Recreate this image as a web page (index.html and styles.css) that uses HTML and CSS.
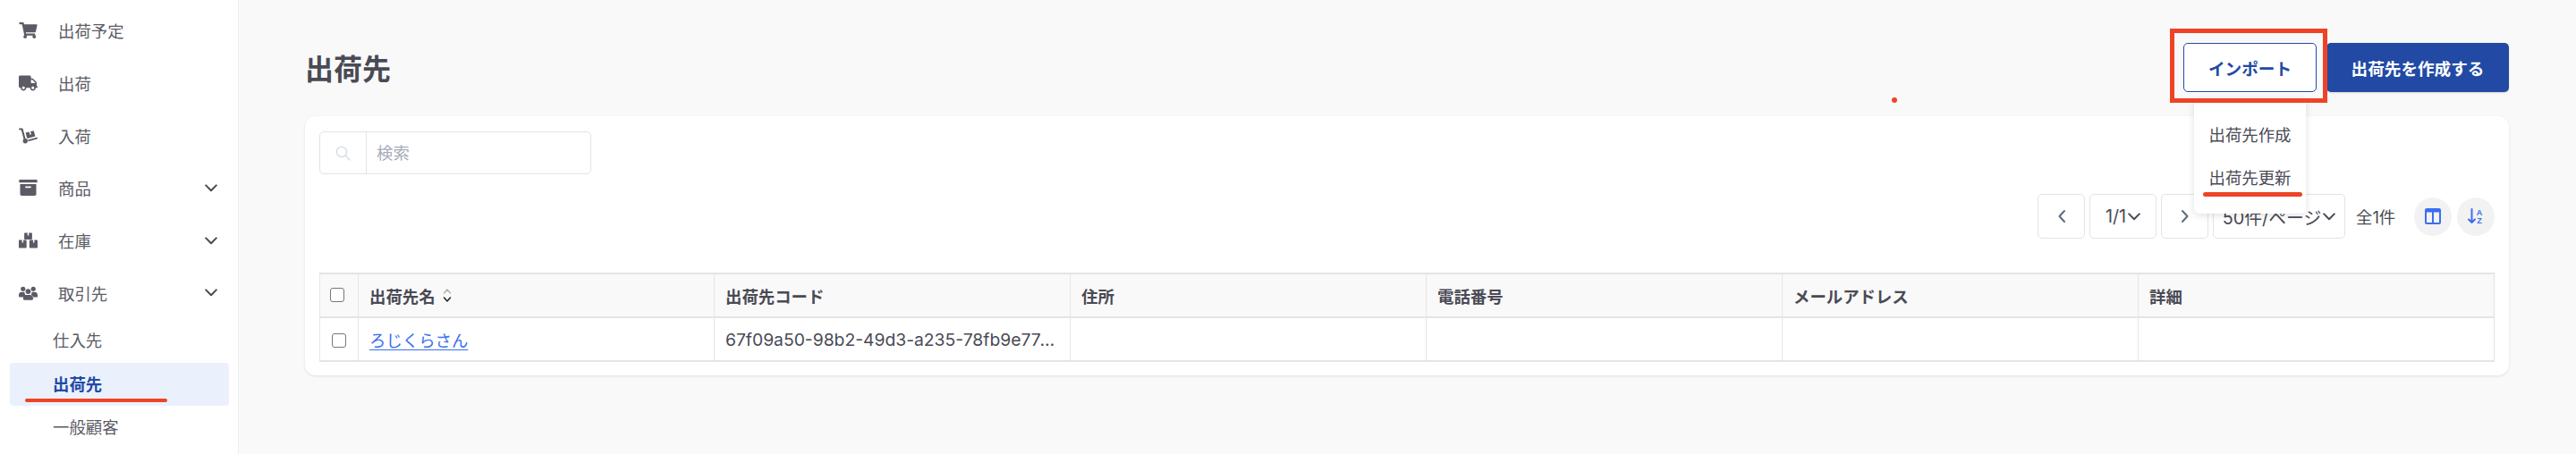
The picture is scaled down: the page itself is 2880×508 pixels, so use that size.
FILE: index.html
```html
<!DOCTYPE html>
<html lang="ja">
<head>
  <meta charset="UTF-8" />
  <title>出荷先</title>
  <link rel="stylesheet" href="styles.css">
</head>
<body>
<svg class="defs" width="0" height="0">
  <symbol id="chev-down" viewBox="0 0 14 9"><path d="M1.2 1.4 7 7.2l5.8-5.8" fill="none" stroke="currentColor" stroke-width="2" stroke-linecap="round" stroke-linejoin="round"/></symbol>
</svg>
<div class="app">
  <aside class="sidebar">
    <ul class="menu">
      <li class="menu-item">
        <svg class="menu-icon" viewBox="0 0 576 512"><path fill="currentColor" d="M528.12 301.319l47.273-208C578.806 78.301 567.391 64 551.99 64H159.208l-9.166-44.81C147.758 8.021 137.93 0 126.529 0H24C10.745 0 0 10.745 0 24v16c0 13.255 10.745 24 24 24h69.883l70.248 343.435C147.325 417.1 136 435.222 136 456c0 30.928 25.072 56 56 56s56-25.072 56-56c0-15.674-6.447-29.835-16.824-40h209.647C430.447 426.165 424 440.326 424 456c0 30.928 25.072 56 56 56s56-25.072 56-56c0-22.172-12.888-41.332-31.579-50.405l5.517-24.276c3.413-15.018-8.002-29.319-23.403-29.319H218.117l-6.545-32h293.145c11.206 0 20.92-7.754 23.403-18.681z"/></svg>
        <span>出荷予定</span>
      </li>
      <li class="menu-item">
        <svg class="menu-icon" viewBox="0 0 640 512"><path fill="currentColor" d="M624 352h-16V243.9c0-12.7-5.1-24.9-14.1-33.9L494 110.1c-9-9-21.2-14.1-33.9-14.1H416V48c0-26.5-21.5-48-48-48H48C21.5 0 0 21.5 0 48v320c0 26.5 21.5 48 48 48h16c0 53 43 96 96 96s96-43 96-96h128c0 53 43 96 96 96s96-43 96-96h48c8.8 0 16-7.2 16-16v-32c0-8.8-7.2-16-16-16zM160 464c-26.5 0-48-21.5-48-48s21.5-48 48-48 48 21.5 48 48-21.5 48-48 48zm320 0c-26.5 0-48-21.5-48-48s21.5-48 48-48 48 21.5 48 48-21.5 48-48 48zm80-208H416V144h44.1l99.9 99.9V256z"/></svg>
        <span>出荷</span>
      </li>
      <li class="menu-item">
        <svg class="menu-icon" viewBox="0 0 22 18"><path fill="none" stroke="currentColor" stroke-width="2.2" stroke-linecap="round" stroke-linejoin="round" d="M1.2 1.2h2.6l3.2 12"/><circle fill="currentColor" cx="7.6" cy="15" r="2.8"/><path fill="currentColor" d="M10.6 13.6 21 10.8c.7-.2 1 .3 1 .9 0 .5-.2.9-.7 1l-10.2 2.8zM8 5.4l4-1.1 1 3.3 1.6-.4-1-3.3 3.9-1 1.8 6.6-9.500 2.600z"/></svg>
        <span>入荷</span>
      </li>
      <li class="menu-item">
        <svg class="menu-icon" viewBox="0 0 21 18"><path fill="currentColor" d="M1.200 0h18.600c.5 0 .9.400.9.900v2.400H.3V.9c0-.5.400-.9.900-.9zM1.500 5h18v11.300c0 .9-.7 1.700-1.700 1.700H3.200c-.9 0-1.700-.8-1.700-1.700zm5.800 2.600v1.700h6.400V7.600z"/></svg>
        <span>商品</span>
        <svg class="menu-chev"><use href="#chev-down"/></svg>
      </li>
      <li class="menu-item">
        <svg class="menu-icon" viewBox="0 0 22 18"><path fill="currentColor" d="M7.200 0h3v3.200h1.600V0h3c.5 0 .8.300.8.800v6.400c0 .5-.3.800-.8.800H7.200c-.5 0-.8-.3-.8-.8V.8c0-.5.300-.8.800-.8zM.8 8.400h3v3.200h1.500V8.400h3c.5 0 .8.300.8.800V17c0 .6-.4 1-1 1H1c-.6 0-1-.4-1-1V9.200c0-.5.300-.8.800-.8zm12.900 0h3v3.200h1.500V8.400h3c.5 0 .8.300.8.800V17c0 .6-.4 1-1 1h-7.600c-.6 0-1-.4-1-1V9.200c0-.5.300-.8.800-.8z"/></svg>
        <span>在庫</span>
        <svg class="menu-chev"><use href="#chev-down"/></svg>
      </li>
      <li class="menu-item">
        <svg class="menu-icon" viewBox="0 0 22 16"><circle fill="currentColor" cx="5" cy="3" r="2.700"/><circle fill="currentColor" cx="17" cy="3" r="2.700"/><circle fill="currentColor" cx="11" cy="6" r="3.100"/><path fill="currentColor" d="M0 10.200C0 8.100 1.500 6.800 3.400 6.800h2.300c.5 0 .9.100 1.200.3-.3 1.200.2 2.500 1 3.300-1 .5-1.700 1.300-2 2.200H1c-.6 0-1-.4-1-1zm22 0c0-2.100-1.500-3.400-3.400-3.400h-2.300c-.5 0-.9.100-1.200.3.300 1.200-.2 2.500-1 3.300 1 .5 1.700 1.300 2 2.200h5.900c.6 0 1-.4 1-1zM8.800 10h4.400c2.100 0 3.600 1.500 3.600 3.500v1.300c0 .7-.5 1.200-1.200 1.200H6.400c-.7 0-1.200-.5-1.200-1.200v-1.300c0-2 1.500-3.500 3.600-3.500z"/></svg>
        <span>取引先</span>
        <svg class="menu-chev"><use href="#chev-down"/></svg>
      </li>
    </ul>
    <ul class="submenu">
      <li class="sub-item">仕入先</li>
      <li class="sub-item active">出荷先<i class="mark mark-side"></i></li>
      <li class="sub-item">一般顧客</li>
    </ul>
  </aside>

  <main class="main">
    <i class="red-dot"></i>
    <header class="page-head">
      <h1>出荷先</h1>
      <div class="actions">
        <div class="import-wrap">
          <button class="btn btn-outline">インポート</button>
          <div class="dropdown">
            <div class="dropdown-item">出荷先作成</div>
            <div class="dropdown-item">出荷先更新<i class="mark mark-drop"></i></div>
          </div>
          <i class="red-box"></i>
        </div>
        <button class="btn btn-primary">出荷先を作成する</button>
      </div>
    </header>

    <section class="card">
      <div class="search">
        <span class="search-icon">
          <svg width="17" height="17" viewBox="0 0 17 17"><circle cx="7" cy="7" r="5.600" fill="none" stroke="#d3d9e6" stroke-width="1.300"/><path d="m11.200 11.200 4.800 4.800" stroke="#d3d9e6" stroke-width="1.300" stroke-linecap="round"/></svg>
        </span>
        <span class="search-text">検索</span>
      </div>

      <div class="pager">
        <div class="page-box page-arrow">
          <svg width="10" height="16" viewBox="0 0 10 16"><path d="M8 2 2.500 8 8 14" fill="none" stroke="#5f6b80" stroke-width="2" stroke-linecap="round" stroke-linejoin="round"/></svg>
        </div>
        <div class="page-box page-num">1/1<svg class="page-chev"><use href="#chev-down"/></svg></div>
        <div class="page-box page-arrow">
          <svg width="10" height="16" viewBox="0 0 10 16"><path d="M2 2l5.500 6L2 14" fill="none" stroke="#5f6b80" stroke-width="2" stroke-linecap="round" stroke-linejoin="round"/></svg>
        </div>
        <div class="page-box page-size">50件/ページ<svg class="page-chev"><use href="#chev-down"/></svg></div>
        <span class="total">全1件</span>
        <div class="round-btns">
          <button class="round-btn">
            <svg width="18" height="18" viewBox="0 0 18 18"><path fill="#3b6ef0" d="M2 0h14c1.100 0 2 .9 2 2v14c0 1.100-.9 2-2 2H2c-1.100 0-2-.9-2-2V2C0 .9.900 0 2 0zm0 4.500V16h6V4.500zm8 0V16h6V4.500z"/></svg>
          </button>
          <button class="round-btn">
            <svg width="18" height="18" viewBox="0 0 18 18"><path d="M4.500 1v15M1 12.500 4.500 16 8 12.500" fill="none" stroke="#3b6ef0" stroke-width="2" stroke-linecap="round" stroke-linejoin="round"/><text class="az" x="13" y="7.500">A</text><text class="az" x="13" y="17">Z</text></svg>
          </button>
        </div>
      </div>

      <table class="grid">
        <thead>
          <tr>
            <th class="col-check"><span class="check check-head"></span></th>
            <th class="col-wide">
              <span class="th-name">出荷先名
                <svg class="sort" width="10" height="17" viewBox="0 0 10 17"><path d="M1.500 6 5 2l3.500 4" fill="none" stroke="#aaa" stroke-width="1.200" stroke-linecap="round" stroke-linejoin="round"/><path d="M1.500 11 5 15l3.500-4" fill="none" stroke="#222" stroke-width="1.500" stroke-linecap="round" stroke-linejoin="round"/></svg>
              </span>
            </th>
            <th class="col-wide">出荷先コード</th>
            <th class="col-wide">住所</th>
            <th class="col-wide">電話番号</th>
            <th class="col-wide">メールアドレス</th>
            <th class="col-wide">詳細</th>
          </tr>
        </thead>
        <tbody>
          <tr>
            <td><span class="check"></span></td>
            <td><a class="link" href="#">ろじくらさん</a></td>
            <td class="ellipsis">67f09a50-98b2-49d3-a235-78fb9e77c1d2</td>
            <td></td>
            <td></td>
            <td></td>
            <td></td>
          </tr>
        </tbody>
      </table>
    </section>
  </main>
</div>
</body>
</html>
```

FILE: styles.css
```css
* {
  box-sizing: border-box;
}

html, body {
  margin: 0;
  height: 100%;
  overflow: hidden;
}

body {
  font-family: Inter, "Noto Sans CJK JP", sans-serif;
  font-size: 18.4px;
  background-color: #f9f9f9;
  color: #4a4a55;
}

.defs {
  position: absolute;
}

.app {
  display: flex;
  height: 508px;
}

/* sidebar */
.sidebar {
  width: 267px;
  flex-shrink: 0;
  background-color: #fff;
  border-right: 1px solid #f0f0f0;
  padding-top: 5px;
  color: #5b5b66;
}

.menu, .submenu {
  list-style: none;
  margin: 0;
  padding: 0;
}

.menu-item {
  display: flex;
  align-items: center;
  height: 58.7px;
  padding-left: 21px;
  padding-right: 23px;
}

.menu-icon {
  width: 21px;
  height: 18px;
  margin-right: 23px;
  color: #5b5b66;
  flex-shrink: 0;
}

.menu-chev {
  width: 14px;
  height: 9px;
  margin-left: auto;
  color: #4a4a55;
}

.submenu {
  padding: 0 10px 0 11px;
}

.sub-item {
  position: relative;
  height: 48.5px;
  line-height: 48px;
  padding-left: 48px;
  border-radius: 4px;
}

.sub-item.active {
  background-color: #eaf1fd;
  color: #224aa5;
  font-weight: 700;
}

/* red annotations */
.mark {
  position: absolute;
  display: block;
  background-color: #ee4326;
  border-radius: 3px;
}

.mark-side {
  left: 17px;
  bottom: 4px;
  width: 159px;
  height: 4px;
}

.mark-drop {
  left: 10px;
  bottom: 3px;
  width: 111px;
  height: 5px;
}

.red-box {
  position: absolute;
  left: -15px;
  top: -16px;
  width: 176px;
  height: 83px;
  border: 5px solid #ee4326;
}

.red-dot {
  position: absolute;
  left: 2115px;
  top: 109px;
  width: 6px;
  height: 6px;
  border-radius: 50%;
  background-color: #ee4326;
}

/* main */
.main {
  flex: 1;
  padding: 48px 75px 0 74px;
}

.page-head {
  display: flex;
  align-items: center;
  justify-content: space-between;
  height: 55px;
  margin-bottom: 27px;
}

h1 {
  margin: 0 0 1px 0;
  font-size: 32px;
  font-weight: 700;
  color: #4a4a55;
}

.actions {
  display: flex;
  gap: 11px;
}

.import-wrap {
  position: relative;
}

.btn {
  display: block;
  height: 55px;
  font-family: inherit;
  font-size: 18.6px;
  font-weight: 700;
  border-radius: 5px;
  cursor: pointer;
}

.btn-outline {
  width: 149px;
  background-color: #fff;
  border: 1px solid #224aa5;
  color: #224aa5;
}

.btn-primary {
  width: 204px;
  background-color: #224aa5;
  border: none;
  color: #fff;
  box-shadow: 0 1px 2px rgba(0, 0, 0, 0.15);
}

.dropdown {
  position: absolute;
  left: 12px;
  top: 62px;
  width: 125px;
  height: 129px;
  padding-top: 17px;
  background-color: #fff;
  border-radius: 0 0 6px 6px;
  box-shadow: 0 2px 8px rgba(0, 0, 0, 0.12);
  z-index: 2;
}

.dropdown-item {
  position: relative;
  height: 48px;
  line-height: 48px;
  text-align: center;
}

.import-wrap .red-box {
  z-index: 3;
}

/* card */
.card {
  height: 290px;
  padding: 17px 16px;
  background-color: #fff;
  border-radius: 12px;
  box-shadow: 0 1px 3px rgba(0, 0, 0, 0.1);
}

.search {
  display: flex;
  width: 304px;
  height: 48px;
  border: 1px solid #e2e3e6;
  border-radius: 5px;
}

.search-icon {
  display: flex;
  align-items: center;
  justify-content: center;
  width: 52px;
  border-right: 1px solid #e2e3e6;
}

.search-text {
  line-height: 47px;
  padding-left: 11px;
  color: #a4abb8;
}

.pager {
  display: flex;
  align-items: center;
  justify-content: flex-end;
  height: 50px;
  margin-top: 22px;
  margin-bottom: 38px;
}

.page-box {
  display: flex;
  align-items: center;
  justify-content: center;
  height: 50px;
  margin-right: 5px;
  border: 1px solid #e2e3e6;
  border-radius: 5px;
  background-color: #fff;
  font-size: 19.8px;
}

.page-arrow {
  width: 53px;
}

.page-num {
  width: 75px;
}

.page-size {
  width: 148px;
  margin-right: 12px;
}

.page-chev {
  width: 14px;
  height: 9px;
  margin-left: 2px;
  color: #4a4a55;
}

.total {
  width: 48px;
  white-space: nowrap;
}

.round-btns {
  display: flex;
  gap: 6px;
  margin-left: 17px;
}

.round-btn {
  display: flex;
  align-items: center;
  justify-content: center;
  width: 42px;
  height: 43px;
  padding: 0;
  border: none;
  border-radius: 50%;
  background-color: #f2f2f2;
}

.az {
  font-size: 9px;
  font-weight: 700;
  fill: #3b6ef0;
  text-anchor: middle;
}

/* table */
.grid {
  width: 2431px;
  table-layout: fixed;
  border-collapse: collapse;
  border: 1px solid #e2e2e2;
}

.col-check {
  width: 43px;
}

.col-wide {
  width: 398px;
}

.grid th, .grid td {
  height: 49px;
  padding: 0 12px;
  border-left: 1px solid #e6e6e6;
  border-top: 2px solid #e4e4e4;
  border-bottom: 2px solid #e4e4e4;
  text-align: left;
  white-space: nowrap;
}

.grid th {
  background-color: #f9f9f9;
  font-weight: 700;
  color: #4a4a55;
}

.grid th:first-child, .grid td:first-child {
  padding: 0;
  text-align: center;
}

.th-name {
  display: flex;
  align-items: center;
  gap: 8px;
}

.check {
  display: inline-block;
  width: 16px;
  height: 16px;
  border: 1px solid #777;
  border-radius: 3px;
  background-color: #fff;
  vertical-align: middle;
}

.check-head {
  margin: 0 4px 4px 0;
}

.link {
  color: #3b6ef0;
  text-decoration: underline;
  text-underline-offset: 3px;
}

.ellipsis {
  overflow: hidden;
  text-overflow: ellipsis;
  font-size: 19.3px;
}
```
